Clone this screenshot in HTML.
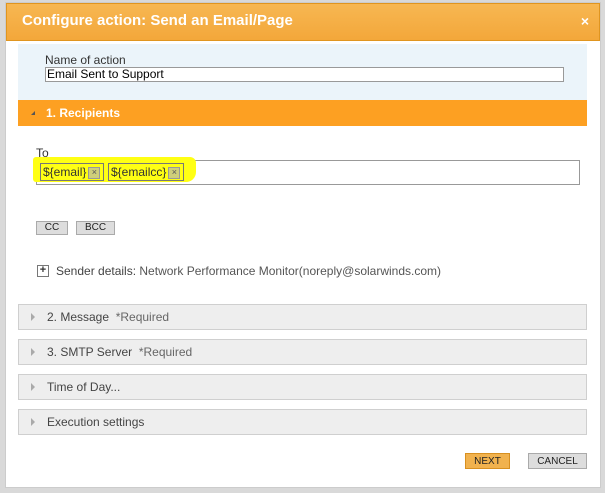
<!DOCTYPE html>
<html><head><style>
body{margin:0;width:605px;height:493px;background:#d9d9d9;font-family:"Liberation Sans",Arial,sans-serif;position:relative;overflow:hidden;font-size:12px;color:#333}
.a{position:absolute}
.dlg{left:5px;top:2px;width:596px;height:486px;background:#fff;border:1px solid #ccc;box-sizing:border-box}
.hdr{left:6px;top:3px;width:594px;height:38px;background:linear-gradient(#f7b752,#f3a73a);border:1px solid #e0951f;box-sizing:border-box;color:#fff;font-weight:bold;font-size:15px;line-height:34px;padding-left:15px}
.sec{left:18px;width:569px;height:26px;background:#eeeeee;border:1px solid #cfcfcf;box-sizing:border-box;line-height:24px;padding-left:28px;color:#444;font-size:12px}
.tri{position:absolute;left:12px;top:8px;width:0;height:0;border-left:4px solid #aaa;border-top:4px solid transparent;border-bottom:4px solid transparent}
.btn{height:16px;border:1px solid #aaa;background:#ddd;box-sizing:border-box;font-size:10px;text-align:center;line-height:14px;color:#222}
.chip{top:163px;height:18px;border:1px solid #777;box-sizing:border-box;font-size:12px;line-height:16px;padding-left:2px;color:#333}
.x{display:inline-block;width:10px;height:10px;border:1px solid #999;background:#cfcf7a;font-size:9px;line-height:9px;text-align:center;vertical-align:middle;margin-left:2px;color:#555}
</style></head><body>
<div class="a dlg"></div>
<div class="a hdr">Configure action: Send an Email/Page<span style="position:absolute;right:10px;top:0;font-size:14px">×</span></div>
<div class="a" style="left:18px;top:44px;width:569px;height:56px;background:#ebf4fa"></div>
<div class="a" style="left:45px;top:53px;font-size:12px">Name of action</div>
<div class="a" style="left:45px;top:67px;width:519px;height:15px;border:1px solid #999;background:#fff;box-sizing:border-box;font-size:12px;line-height:13px;padding-left:1px;color:#000">Email Sent to Support</div>
<div class="a" style="left:18px;top:100px;width:569px;height:26px;background:#fda022;color:#fff;font-weight:bold;line-height:26px;padding-left:28px;box-sizing:border-box">1. Recipients<span style="position:absolute;left:13px;top:11px;width:0;height:0;border-right:4px solid #555;border-top:4px solid transparent"></span></div>
<div class="a" style="left:36px;top:146px">To</div>
<div class="a" style="left:36px;top:160px;width:544px;height:25px;border:1px solid #999;box-sizing:border-box"></div>
<div class="a" style="left:33px;top:157px;width:163px;height:25px;background:#ffff14;border-radius:3px 6px 10px 3px"></div>
<div class="a chip" style="left:40px;width:64px">${email}<span class="x">×</span></div>
<div class="a chip" style="left:108px;width:76px">${emailcc}<span class="x">×</span></div>
<div class="a btn" style="left:36px;top:221px;width:32px;height:14px;line-height:12px">CC</div>
<div class="a btn" style="left:76px;top:221px;width:39px;height:14px;line-height:12px">BCC</div>
<div class="a" style="left:37px;top:265px;width:10px;height:10px;border:1px solid #777;font-size:11px;line-height:9px;text-align:center;font-weight:bold">+</div>
<div class="a" style="left:56px;top:264px;font-size:12px;color:#444">Sender details: <span style="color:#555">Network Performance Monitor(noreply@solarwinds.com)</span></div>
<div class="a sec" style="top:304px"><span class="tri"></span>2. Message&nbsp; <span style="color:#666">*Required</span></div>
<div class="a sec" style="top:339px"><span class="tri"></span>3. SMTP Server&nbsp; <span style="color:#666">*Required</span></div>
<div class="a sec" style="top:374px"><span class="tri"></span>Time of Day...</div>
<div class="a sec" style="top:409px"><span class="tri"></span>Execution settings</div>
<div class="a btn" style="left:465px;top:453px;width:45px;background:#f1b24e;border-color:#d89020;line-height:16px">NEXT</div>
<div class="a btn" style="left:528px;top:453px;width:59px;line-height:16px">CANCEL</div>
</body></html>
